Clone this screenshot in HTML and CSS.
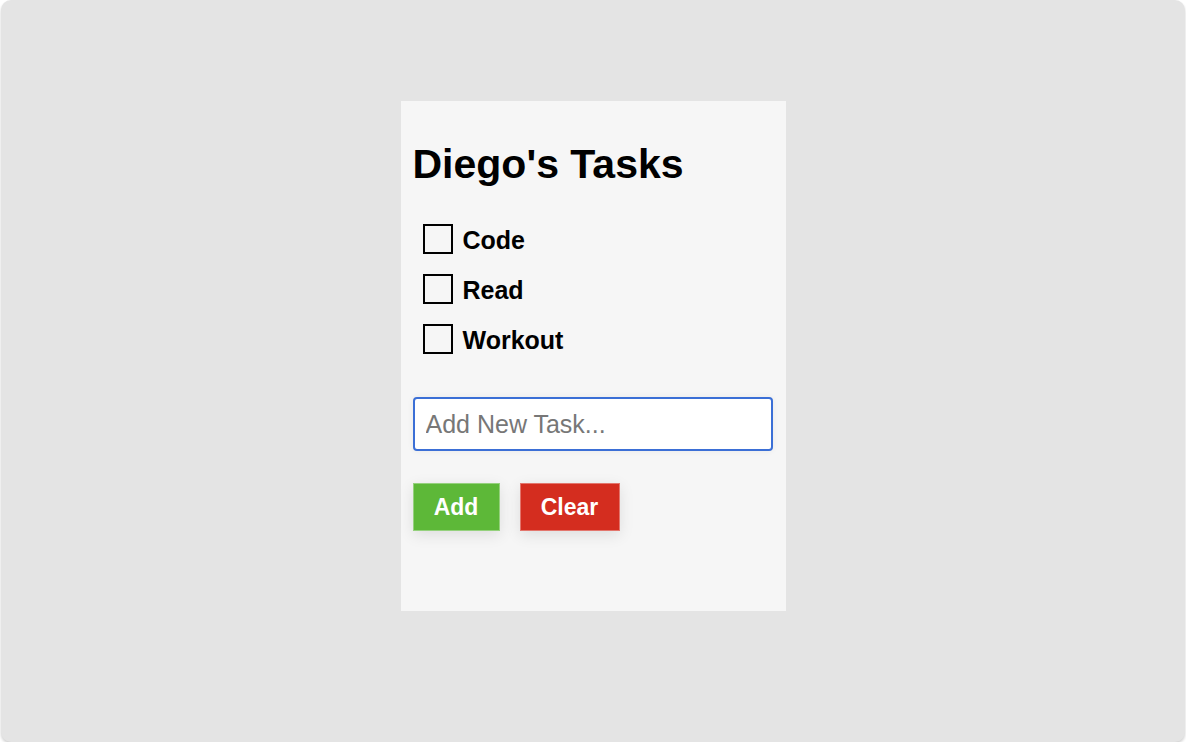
FILE: index.html
```html
<!DOCTYPE html>
<html lang="en">
<head>
<meta charset="utf-8">
<title>Diego's Tasks</title>
<link rel="stylesheet" href="styles.css">
</head>
<body>
<div class="frame">
  <div class="panel">
    <h1 class="title">Diego's Tasks</h1>
    <ul class="tasks">
      <li class="task"><input type="checkbox" class="check"><span class="label">Code</span></li>
      <li class="task"><input type="checkbox" class="check"><span class="label">Read</span></li>
      <li class="task"><input type="checkbox" class="check"><span class="label">Workout</span></li>
    </ul>
    <input type="text" class="new-task" placeholder="Add New Task...">
    <div class="actions">
      <button class="btn btn-add">Add</button>
      <button class="btn btn-clear">Clear</button>
    </div>
  </div>
</div>
</body>
</html>
```

FILE: styles.css
```css
* {
  box-sizing: border-box;
}

html, body {
  margin: 0;
  padding: 0;
  background: #ffffff;
}

body {
  font-family: "Liberation Sans", Arial, Helvetica, sans-serif;
  color: #000;
}

.frame {
  margin: 0 1px;
  height: 742px;
  background: #e4e4e4;
  border-radius: 10px;
  box-shadow: 0 2px 3px rgba(0, 0, 0, 0.18);
  display: flex;
  justify-content: center;
  align-items: flex-start;
  padding-top: 101px;
}

.panel {
  width: 385px;
  height: 510px;
  background: #f6f6f6;
  padding: 0 13px 0 12px;
  display: flex;
  flex-direction: column;
  align-items: flex-start;
}

.title {
  margin: 40px 0 26px 0;
  font-size: 41px;
  line-height: 47px;
  font-weight: bold;
}

.tasks {
  list-style: none;
  margin: 0;
  padding: 0 0 0 10px;
  width: 100%;
}

.task {
  height: 50px;
  display: flex;
  align-items: center;
  gap: 10px;
}

.check {
  appearance: none;
  -webkit-appearance: none;
  margin: 0;
  width: 30px;
  height: 30px;
  border: 2px solid #000;
  border-radius: 0;
  background: transparent;
  flex: none;
}

.label {
  font-size: 25px;
  font-weight: bold;
  line-height: 30px;
  padding-top: 1px;
}

.new-task {
  margin-top: 33px;
  width: 360px;
  height: 54px;
  border: 2px solid #3b6fd6;
  border-radius: 4px;
  background: #fff;
  padding: 0 11px;
  font-family: "Liberation Sans", Arial, Helvetica, sans-serif;
  font-size: 25px;
  color: #000;
  outline: none;
  box-shadow: 0 0 6px rgba(0, 0, 0, 0.06);
}

.new-task::placeholder {
  color: #777;
}

.actions {
  margin-top: 32px;
  display: flex;
  gap: 20px;
}

.btn {
  height: 48px;
  padding: 0 20px;
  border: 1px solid rgba(255, 255, 255, 0.35);
  border-radius: 0;
  color: #fff;
  font-family: "Liberation Sans", Arial, Helvetica, sans-serif;
  font-size: 23px;
  font-weight: bold;
  box-shadow: 0 4px 14px rgba(0, 0, 0, 0.1);
  cursor: pointer;
}

.btn-add {
  width: 87px;
  background: #5db838;
}

.btn-clear {
  width: 100px;
  background: #d42d1f;
}
```
